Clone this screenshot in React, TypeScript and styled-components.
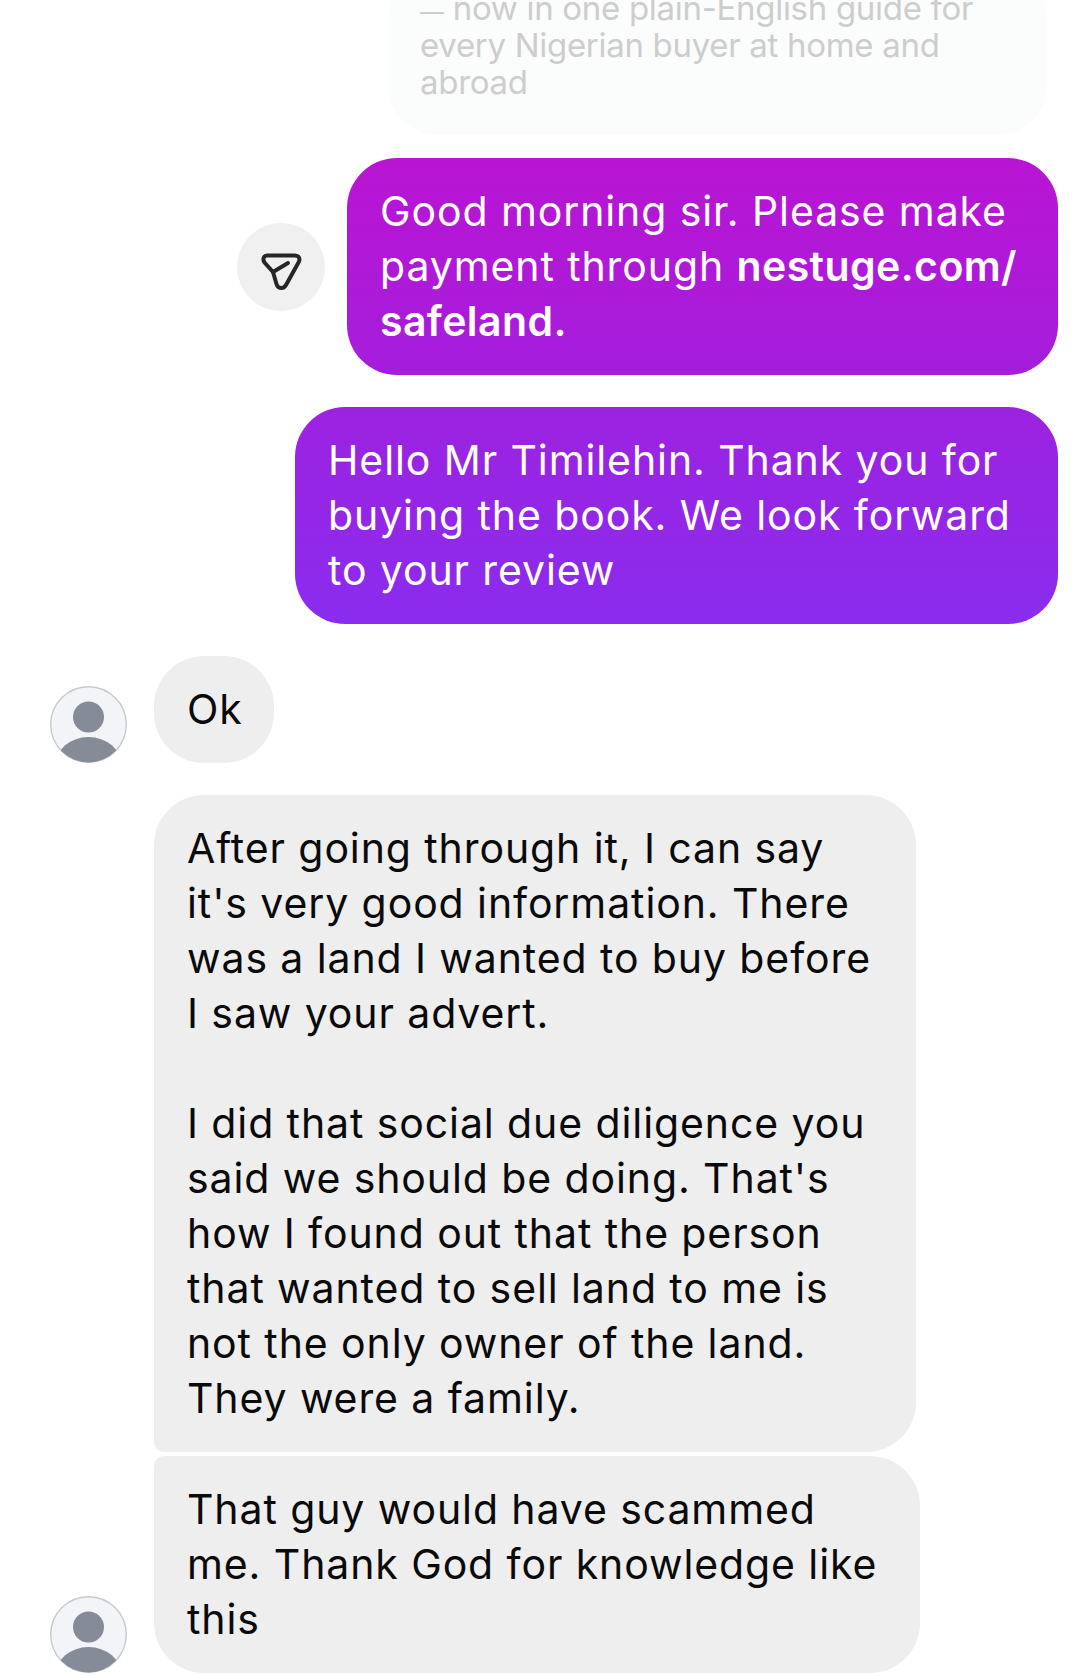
import React, { FunctionComponent } from 'react'
import styled, { createGlobalStyle } from 'styled-components'

const GlobalStyle = createGlobalStyle`
  html, body {
    margin: 0;
    padding: 0;
    background: #fff;
  }
`

const Screen = styled.div`
  width: 1080px;
  height: 1677px;
  overflow: hidden;
  background: #fff;
  font-family: Inter, 'Noto Sans', sans-serif;
  font-size: 41px;
  line-height: 55px;
  letter-spacing: 0.9px;
`

const Thread = styled.div`
  display: flex;
  flex-direction: column;
  margin-top: -30px;
`

const Row = styled.div<{ $side: 'left' | 'right'; $gap?: number; $align?: string }>`
  display: flex;
  justify-content: ${p => (p.$side === 'right' ? 'flex-end' : 'flex-start')};
  align-items: ${p => p.$align || 'flex-end'};
  gap: 27px;
  padding: ${p => (p.$side === 'right' ? '0 22px 0 0' : '0 0 0 50px')};
  margin-top: ${p => p.$gap || 0}px;
`

const Bubble = styled.div`
  box-sizing: border-box;
  border-radius: 50px;
  white-space: nowrap;
`

const FadedBubble = styled(Bubble)`
  width: 659px;
  height: 165px;
  margin-right: 11px;
  padding: 20px 32px 0;
  background: #fbfcfc;
  color: #cdcdcd;
  font-size: 33px;
  line-height: 37px;
  letter-spacing: -0.3px;
`

const Dash = styled.span`
  font-size: 24px;
  line-height: 0;
`

const SentBubble = styled(Bubble)<{ $from: string; $to: string; $width: number }>`
  width: ${p => p.$width}px;
  background: linear-gradient(180deg, ${p => p.$from}, ${p => p.$to});
  color: #fff;
  padding: 26px 33px;
`

const ReceivedBubble = styled(Bubble)<{ $width: number; $corners?: string }>`
  width: ${p => p.$width}px;
  background: #eeeeef;
  color: #0a0a0a;
  padding: 26px 33px;
  border-radius: ${p => p.$corners || '50px'};
`

const Bold = styled.b`
  font-weight: 600;
  letter-spacing: 0.4px;
`

const ShareButton = styled.div`
  width: 88px;
  height: 88px;
  box-sizing: border-box;
  padding-top: 10px;
  border-radius: 50%;
  background: #f0f0f0;
  display: flex;
  align-items: center;
  justify-content: center;
  margin-right: -5px;
`

const Avatar = styled.svg`
  width: 77px;
  height: 77px;
  flex-shrink: 0;
`

const AvatarSlot = styled.div`
  width: 77px;
  flex-shrink: 0;
`

const ShareIcon: FunctionComponent = () => (
  <svg width="41" height="38" viewBox="0 0 41 38" fill="none" stroke="#262626" strokeWidth="4" strokeLinecap="round" strokeLinejoin="round">
    <path d="M6 2.5 H34 C38 2.5 39.5 6 37.5 9.5 L25 32 C22.5 36.5 17 36 15.5 31 L12 19 L3.5 9.5 C1.5 6.5 2.5 2.5 6 2.5 Z" />
    <path d="M12 19 L27 10" />
  </svg>
)

const UserAvatar: FunctionComponent = () => (
  <Avatar viewBox="0 0 77 77">
    <defs>
      <clipPath id="avatar-clip">
        <circle cx="38.5" cy="38.5" r="38" />
      </clipPath>
    </defs>
    <circle cx="38.5" cy="38.5" r="37.8" fill="#f2f4f7" stroke="#c9c9cb" strokeWidth="1.4" />
    <circle cx="38.5" cy="31" r="15.5" fill="#858b97" />
    <ellipse cx="38.5" cy="79" rx="33" ry="28" fill="#858b97" clipPath="url(#avatar-clip)" />
  </Avatar>
)

export default function App() {
  return (
    <Screen>
      <GlobalStyle />
      <Thread>
        <Row $side="right">
          <FadedBubble>
            <Dash>—</Dash> now in one plain-English guide for<br />
            every Nigerian buyer at home and<br />
            abroad
          </FadedBubble>
        </Row>
        <Row $side="right" $gap={23} $align="center">
          <ShareButton><ShareIcon /></ShareButton>
          <SentBubble $width={711} $from="#ba14d3" $to="#a41edc">
            Good morning sir. Please make<br />
            payment through <Bold>nestuge.com/</Bold><br />
            <Bold>safeland.</Bold>
          </SentBubble>
        </Row>
        <Row $side="right" $gap={32}>
          <SentBubble $width={763} $from="#9d22e0" $to="#8a2cee">
            Hello Mr Timilehin. Thank you for<br />
            buying the book. We look forward<br />
            to your review
          </SentBubble>
        </Row>
        <Row $side="left" $gap={32}>
          <UserAvatar />
          <ReceivedBubble $width={120}>Ok</ReceivedBubble>
        </Row>
        <Row $side="left" $gap={32}>
          <AvatarSlot />
          <ReceivedBubble $width={762} $corners="50px 50px 50px 10px">
            After going through it, I can say<br />
            it's very good information. There<br />
            was a land I wanted to buy before<br />
            I saw your advert.<br />
            <br />
            I did that social due diligence you<br />
            said we should be doing. That's<br />
            how I found out that the person<br />
            that wanted to sell land to me is<br />
            not the only owner of the land.<br />
            They were a family.
          </ReceivedBubble>
        </Row>
        <Row $side="left" $gap={4}>
          <UserAvatar />
          <ReceivedBubble $width={766} $corners="10px 50px 50px 50px">
            That guy would have scammed<br />
            me. Thank God for knowledge like<br />
            this
          </ReceivedBubble>
        </Row>
      </Thread>
    </Screen>
  )
}
